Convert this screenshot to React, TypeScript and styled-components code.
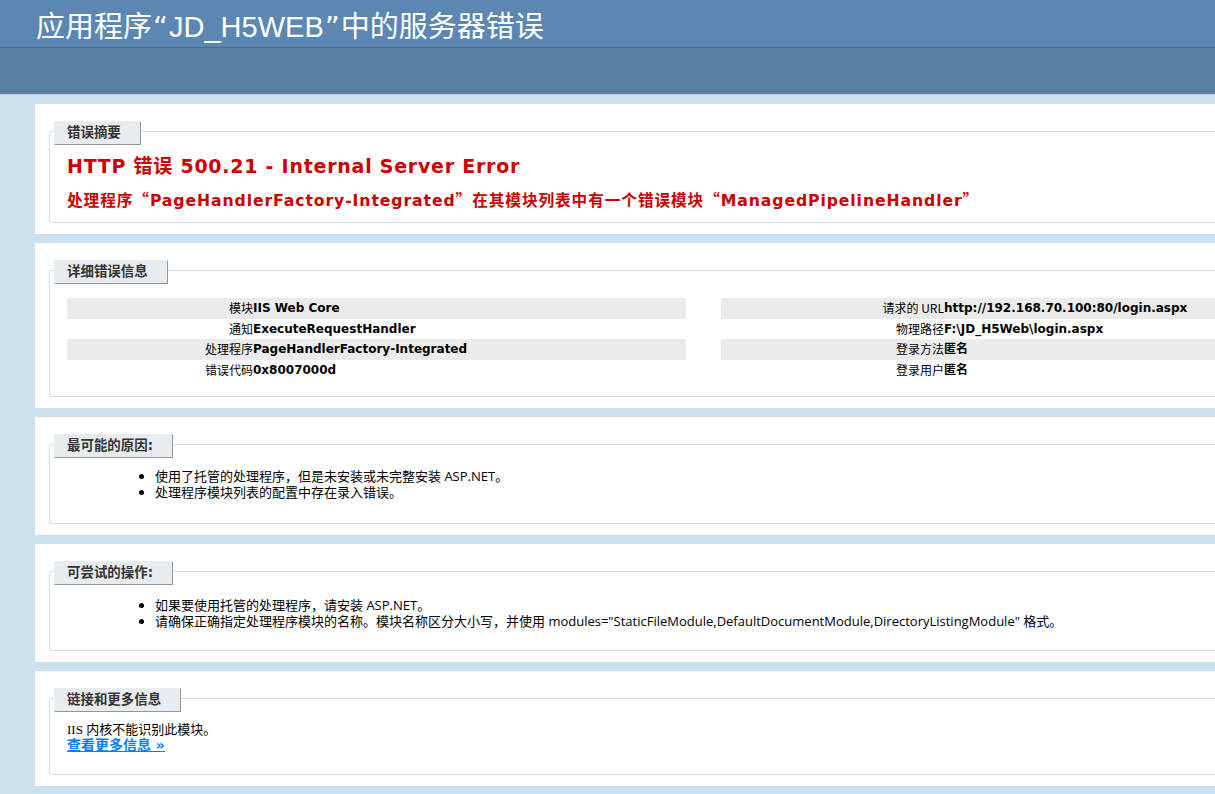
import styled, { createGlobalStyle } from 'styled-components';

const GlobalStyle = createGlobalStyle`
  html, body {
    margin: 0;
    padding: 0;
  }
  body {
    background: #cbe1ef;
    font-family: 'DejaVu Sans', 'Noto Sans CJK SC', sans-serif;
    font-size: 12px;
    color: #000;
    overflow: hidden;
  }
`;

const Viewport = styled.div`
  width: 100vw;
  height: 100vh;
  overflow: hidden;
  background: #cbe1ef;
`;

const Canvas = styled.div`
  width: 1800px;
`;

const Header = styled.div`
  height: 47px;
  padding-left: 36px;
  display: flex;
  align-items: center;
  background: #5c87b2;
  color: #fff;
  h1 {
    margin: 0;
    font-size: 29px;
    font-weight: normal;
    font-family: 'Liberation Sans', 'Noto Sans CJK SC', sans-serif;
  }
`;

const TitleQuote = styled.span`
  font-family: 'DejaVu Sans', sans-serif;
  padding: 0 1px;
`;

const ServerBar = styled.div`
  height: 46px;
  background: #5a7fa5;
  border-top: 1px solid #4a6c8e;
  border-bottom: 1px solid #c1cfdd;
`;

const Content = styled.div`
  padding: 0 0 9px 35px;
`;

const Panel = styled.div`
  margin-top: 9px;
  background: #fff;
  padding: 27px 0 11px 14px;
`;

const Fieldset = styled.div`
  border: 1px solid #d3dde6;
  border-right: none;
  border-radius: 3px 0 0 3px;
  padding: 0 0 11px 17px;
`;

const Legend = styled.div`
  display: block;
  width: fit-content;
  height: 22px;
  line-height: 22px;
  margin: -11px 0 8px -13px;
  padding: 0 19px 0 12px;
  background: #e7ecf0;
  border-top: 1px solid #ededed;
  border-left: 1px solid #ededed;
  border-right: 1px solid #969696;
  border-bottom: 1px solid #969696;
  color: #333;
  font-weight: bold;
  font-size: 13.44px;
`;

const Cjk = styled.span`
  font-family: 'Noto Sans CJK SC', sans-serif;
`;

const Title = styled.h2`
  margin: 9px 0 0;
  height: 24px;
  line-height: 24px;
  font-size: 19px;
  font-weight: bold;
  letter-spacing: 0.75px;
  color: #cc0000;
  white-space: nowrap;
`;

const SubTitle = styled.h3`
  margin: 12px 0 0;
  line-height: 20px;
  font-size: 15.68px;
  font-weight: bold;
  letter-spacing: 0.9px;
  color: #cc0000;
  white-space: nowrap;
`;

const Details = styled.div`
  display: flex;
  margin: 14px 0 5px;
`;

const DetailCol = styled.div<{ $width: number; $gap: number }>`
  width: ${(p) => p.$width}px;
  margin-right: ${(p) => p.$gap}px;
`;

const Table = styled.table`
  width: 100%;
  border-collapse: collapse;
  border-spacing: 0;
`;

const Row = styled.tr<{ $alt: boolean }>`
  background: ${(p) => (p.$alt ? '#ebebeb' : 'transparent')};
`;

const Label = styled.th<{ $width: number }>`
  width: ${(p) => p.$width}px;
  padding: 3px 0;
  line-height: 14.5px;
  text-align: right;
  font-weight: normal;
  font-family: 'Noto Sans CJK SC', sans-serif;
  font-size: 12px;
  vertical-align: top;
`;

const Value = styled.td`
  padding: 3px 0;
  line-height: 14.5px;
  font-weight: bold;
  text-align: left;
  vertical-align: top;
  white-space: nowrap;
`;

const List = styled.ul<{ $top: number; $bottom: number }>`
  margin: ${(p) => p.$top}px 0 ${(p) => p.$bottom}px;
  padding-left: 88px;
  list-style: disc;
  font-family: 'Open Sans', 'Noto Sans CJK SC', sans-serif;
  font-size: 13px;
  li {
    line-height: 16px;
    white-space: nowrap;
  }
`;

const Text = styled.p`
  margin: 10px 0 0;
  line-height: 16px;
  font-size: 13px;
  font-family: 'Liberation Serif', 'Noto Sans CJK SC', serif;
`;

const MoreLink = styled.a`
  display: block;
  width: fit-content;
  margin-bottom: 10px;
  line-height: 15px;
  color: #007eff;
  font-weight: bold;
  font-size: 14px;
  text-decoration: underline;
`;

type Pair = [string, string];

const leftRows: Pair[] = [
  ['模块', 'IIS Web Core'],
  ['通知', 'ExecuteRequestHandler'],
  ['处理程序', 'PageHandlerFactory-Integrated'],
  ['错误代码', '0x8007000d'],
];

const rightRows: Pair[] = [
  ['请求的 URL', 'http://192.168.70.100:80/login.aspx'],
  ['物理路径', 'F:\\JD_H5Web\\login.aspx'],
  ['登录方法', '匿名'],
  ['登录用户', '匿名'],
];

const InfoTable = ({ rows, labelWidth }: { rows: Pair[]; labelWidth: number }) => (
  <Table>
    <tbody>
      {rows.map(([k, v], i) => (
        <Row key={k} $alt={i % 2 === 0}>
          <Label $width={labelWidth}>{k}</Label>
          <Value>{v}</Value>
        </Row>
      ))}
    </tbody>
  </Table>
);

const Section = ({ title, children }: { title: string; children: React.ReactNode }) => (
  <Panel>
    <Fieldset>
      <Legend>{title}</Legend>
      {children}
    </Fieldset>
  </Panel>
);

const App = () => {
  return (
    <Viewport>
      <GlobalStyle />
      <Canvas>
        <Header>
          <h1>
            应用程序<TitleQuote>“</TitleQuote>JD_H5WEB<TitleQuote>”</TitleQuote>中的服务器错误
          </h1>
        </Header>
        <ServerBar />
        <Content>
          <Section title='错误摘要'>
            <Title>HTTP 错误 500.21 - Internal Server Error</Title>
            <SubTitle>
              处理程序<Cjk>“</Cjk>PageHandlerFactory-Integrated<Cjk>”</Cjk>在其模块列表中有一个错误模块
              <Cjk>“</Cjk>ManagedPipelineHandler<Cjk>”</Cjk>
            </SubTitle>
          </Section>

          <Section title='详细错误信息'>
            <Details>
              <DetailCol $width={619} $gap={35}>
                <InfoTable rows={leftRows} labelWidth={186} />
              </DetailCol>
              <DetailCol $width={1040} $gap={0}>
                <InfoTable rows={rightRows} labelWidth={223} />
              </DetailCol>
            </Details>
          </Section>

          <Section title='最可能的原因:'>
            <List $top={10} $bottom={12}>
              <li>使用了托管的处理程序，但是未安装或未完整安装 ASP.NET。</li>
              <li>处理程序模块列表的配置中存在录入错误。</li>
            </List>
          </Section>

          <Section title='可尝试的操作:'>
            <List $top={12} $bottom={10}>
              <li>如果要使用托管的处理程序，请安装 ASP.NET。</li>
              <li>
                请确保正确指定处理程序模块的名称。模块名称区分大小写，并使用
                modules="StaticFileModule,DefaultDocumentModule,DirectoryListingModule" 格式。
              </li>
            </List>
          </Section>

          <Section title='链接和更多信息'>
            <Text>IIS 内核不能识别此模块。</Text>
            <MoreLink href='#'>查看更多信息 »</MoreLink>
          </Section>
        </Content>
      </Canvas>
    </Viewport>
  );
};

export default App;
